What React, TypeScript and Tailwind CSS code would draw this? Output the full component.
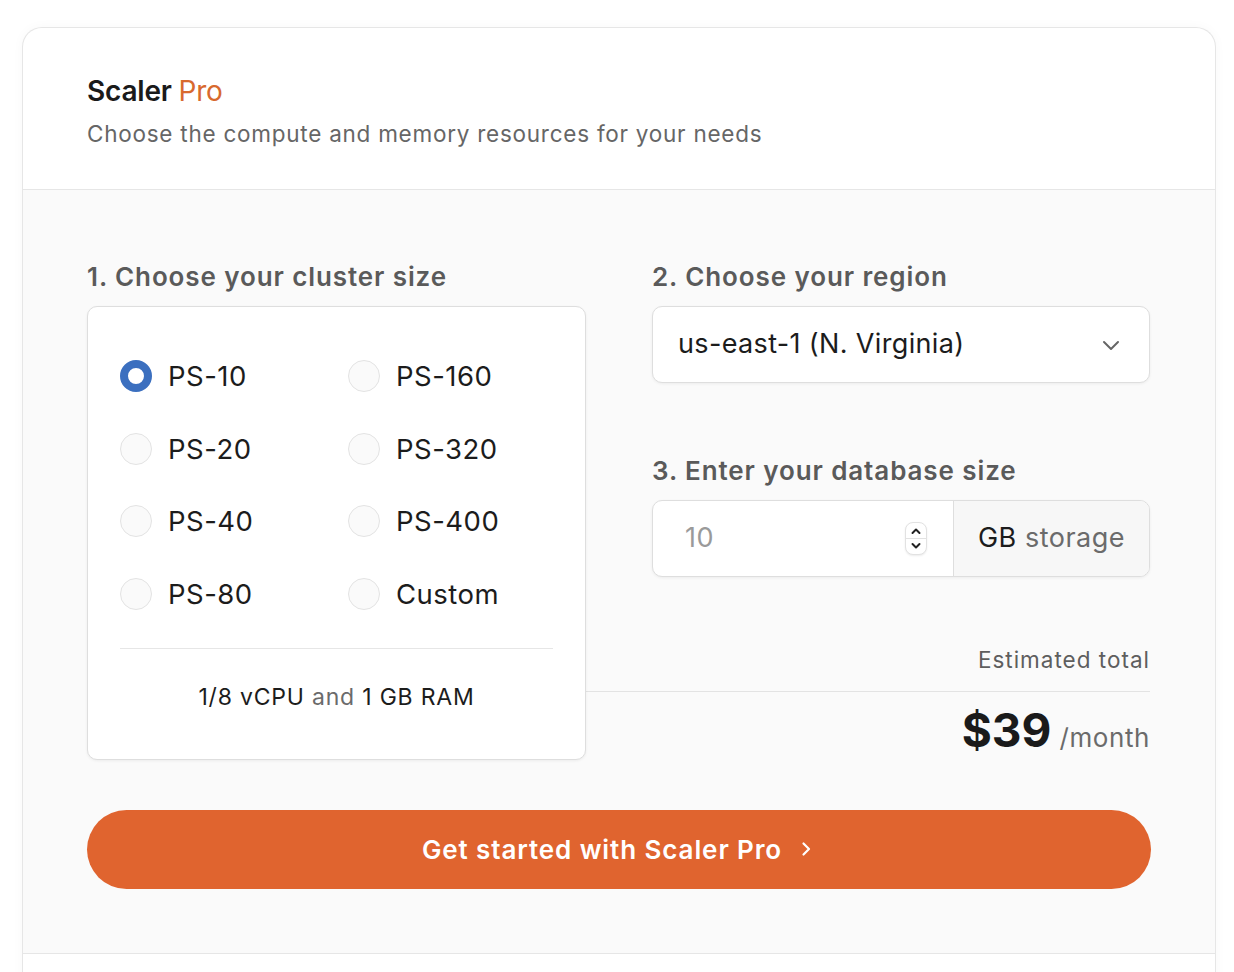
import React from "react";

const Radio = ({ checked, label }: { checked?: boolean; label: string }) => (
  <label className="flex items-center h-8 gap-[16px]">
    {checked ? (
      <span className="w-[32px] h-[32px] rounded-full border-[8px] border-[#3b6fbf] bg-white box-border" />
    ) : (
      <span className="w-[32px] h-[32px] rounded-full border border-[#e3e3e3] bg-[#fafafa] box-border" />
    )}
    <span className="text-[27.5px] leading-8 text-[#1c1c1c] tracking-[0.5px]">{label}</span>
  </label>
);

export default function App() {
  const opts = [
    ["PS-10", "PS-160"],
    ["PS-20", "PS-320"],
    ["PS-40", "PS-400"],
    ["PS-80", "Custom"],
  ];
  return (
    <div
      className="min-h-[972px] bg-white pt-[27px]"
      style={{ fontFamily: "Inter, 'Noto Sans', sans-serif" }}
    >
      <div className="ml-[22px] w-[1194px] rounded-t-[20px] border border-b-0 border-[#e6e6e6] bg-white shadow-[0_0_12px_rgba(0,0,0,0.03)]">
        {/* header */}
        <div className="px-[64px] pt-[45px] pb-[39px] border-b border-[#e6e6e6]">
          <div className="text-[28px] leading-[36px] font-semibold text-[#1a1a1a] tracking-[-0.2px]">
            Scaler <span className="font-normal text-[#d8692e]">Pro</span>
          </div>
          <div className="mt-[9px] text-[22.5px] leading-[32px] text-[#666666] tracking-[0.75px]">
            Choose the compute and memory resources for your needs
          </div>
        </div>

        {/* body */}
        <div className="bg-[#fafafa] px-[64px] pt-[71px] pb-[64px] border-b border-[#e6e6e6]">
          <div className="grid grid-cols-[499px_498px] gap-x-[66px]">
            {/* left */}
            <div className="relative z-10">
              <div className="text-[26px] leading-[32px] font-semibold text-[#5a5a5a] tracking-[0.9px]">
                1. Choose your cluster size
              </div>
              <div className="mt-[13px] bg-white border border-[#dedede] rounded-[10px] shadow-[0_1px_3px_rgba(0,0,0,0.06)] px-[32px] pt-[53px] pb-[46px]">
                <div className="grid grid-cols-[228px_1fr] gap-y-[40.6px]">
                  {opts.flat().map((o, i) => (
                    <Radio key={o} label={o} checked={i === 0} />
                  ))}
                </div>
                <div className="mt-[38px] border-t border-[#e6e6e6]" />
                <div className="mt-[32px] text-center text-[23px] leading-[32px] text-[#1c1c1c] tracking-[0.8px]">
                  1/8 vCPU <span className="text-[#6b6b6b]">and</span> 1 GB RAM
                </div>
              </div>
            </div>

            {/* right */}
            <div>
              <div className="text-[26px] leading-[32px] font-semibold text-[#5a5a5a] tracking-[0.9px]">
                2. Choose your region
              </div>
              <div className="mt-[13px] h-[77px] bg-white border border-[#dedede] rounded-[10px] shadow-[0_1px_3px_rgba(0,0,0,0.06)] flex items-center justify-between pl-[25px] pr-[26px]">
                <span className="text-[27px] text-[#1c1c1c] tracking-[0.35px]">us-east-1 (N. Virginia)</span>
                <svg width="24" height="24" viewBox="0 0 24 24" fill="none" stroke="#666" strokeWidth="2" strokeLinecap="round" strokeLinejoin="round">
                  <path d="M5 9l7 7 7-7" />
                </svg>
              </div>

              <div className="mt-[72px] text-[26px] leading-[32px] font-semibold text-[#5a5a5a] tracking-[0.9px]">
                3. Enter your database size
              </div>
              <div className="mt-[13px] h-[77px] flex bg-white border border-[#dedede] rounded-[10px] shadow-[0_1px_3px_rgba(0,0,0,0.06)] overflow-hidden">
                <div className="w-[301px] flex items-center justify-between pl-[32px] pr-[26px] border-r border-[#dedede]">
                  <span className="text-[27px] text-[#9a9a9a] tracking-[0.5px]">10</span>
                  <span className="flex flex-col items-center w-[22px] h-[33px] rounded-[8px] border border-[#e2e2e2] shadow-[0_1px_2px_rgba(0,0,0,0.08)] bg-white">
                    <svg width="14" height="15" viewBox="0 0 14 15" fill="none" stroke="#222" strokeWidth="2" strokeLinecap="round" strokeLinejoin="round">
                      <path d="M3.5 10l3.5-3.5 3.5 3.5" />
                    </svg>
                    <span className="w-full border-t border-[#e2e2e2]" />
                    <svg width="14" height="15" viewBox="0 0 14 15" fill="none" stroke="#222" strokeWidth="2" strokeLinecap="round" strokeLinejoin="round">
                      <path d="M3.5 5l3.5 3.5 3.5-3.5" />
                    </svg>
                  </span>
                </div>
                <div className="flex-1 flex items-center justify-center bg-[#f7f7f7] text-[27px] tracking-[0.5px]">
                  <span className="text-[#1c1c1c]">GB</span>
                  <span className="text-[#6b6b6b]">&nbsp;storage</span>
                </div>
              </div>

              <div className="mt-[68px] text-right text-[22.5px] leading-[30px] text-[#5e5e5e] tracking-[1px]">
                Estimated total
              </div>
              <div className="mt-[16px] ml-[-66px] border-t border-[#e3e3e3]" />
              <div className="mt-[14px] flex items-baseline justify-end">
                <span className="text-[46px] leading-[48px] font-bold text-[#1a1a1a]">$39</span>
                <span className="ml-[8px] text-[26px] text-[#6b6b6b] tracking-[0.6px]">/month</span>
              </div>
            </div>
          </div>

          <button className="mt-[50px] w-full h-[79px] rounded-full bg-[#e0642f] flex items-center justify-center gap-[14px] text-white text-[26px] font-semibold tracking-[0.9px]">
            <span>Get started with Scaler Pro</span>
            <svg width="20" height="20" viewBox="0 0 20 20" fill="none" stroke="white" strokeWidth="2.2" strokeLinecap="round" strokeLinejoin="round">
              <path d="M7.5 4.5l5.5 5.5-5.5 5.5" />
            </svg>
          </button>
        </div>
        <div className="h-[40px] bg-white" />
      </div>
    </div>
  );
}
